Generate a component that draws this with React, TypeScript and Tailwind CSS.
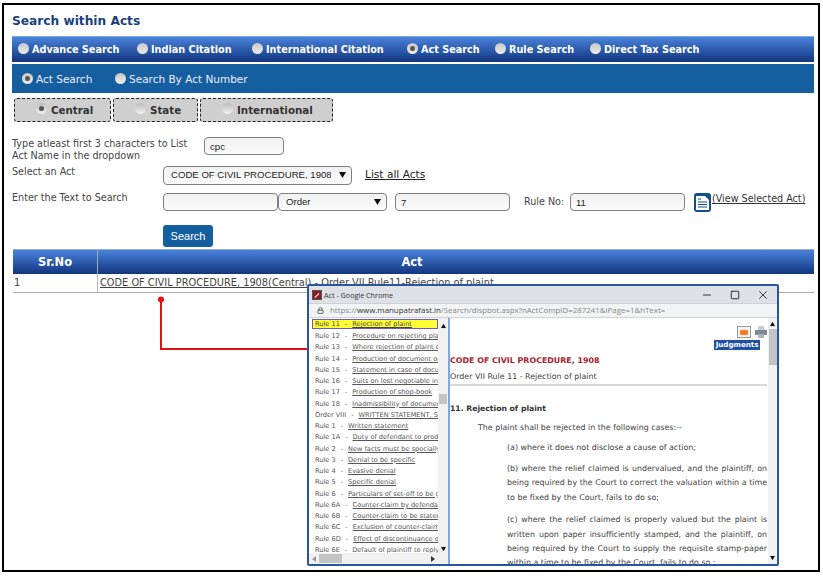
import React from "react";
import { Lock, Minus, Square, X } from "lucide-react";

const Radio = ({ on, light }: { on?: boolean; light?: boolean }) => (
  <span
    className={`inline-flex items-center justify-center w-[11px] h-[11px] rounded-full shrink-0 relative -top-[2px] bg-gradient-to-b ${light ? "from-[#bcbcbc] to-[#f2f2f2]" : "from-[#c8c8c8] to-[#ececec]"}`}
  >
    {on && <span className="w-[5px] h-[5px] rounded-full bg-[#555]" />}
  </span>
);

const Nav = ({ label, on, w }: { label: string; on?: boolean; w: string }) => (
  <span className={`flex items-center gap-[3px] ${w}`}>
    <Radio on={on} />
    <span>{label}</span>
  </span>
);

const Seg = ({ label, on, w, pl }: { label: string; on?: boolean; w: string; pl: string }) => (
  <div className={`flex items-center gap-[4px] h-[24px] pt-[1px] bg-[#cfcfcf] border border-dashed border-[#222] rounded-[3px] ${w} ${pl}`}>
    <Radio on={on} light />
    <span>{label}</span>
  </div>
);

const field = "h-[18px] border border-[#808080] rounded-[4px] bg-gradient-to-b from-[#f1f1f1] to-[#fbfbfb] text-[9.6px] text-[#222] px-[5px] outline-none [font-family:'Liberation_Sans',sans-serif]";

const Arrow = ({ cls }: { cls: string }) => (
  <svg className={`absolute ${cls}`} width="7" height="6" viewBox="0 0 7 6"><path d="M0 0h7L3.5 6z" fill="#111" /></svg>
);

const rules: [string, string][] = [
  ["Rule 12", "Procedure on rejecting plaint"],
  ["Rule 13", "Where rejection of plaint does"],
  ["Rule 14", "Production of document on which"],
  ["Rule 15", "Statement in case of documents"],
  ["Rule 16", "Suits on lost negotiable instruments"],
  ["Rule 17", "Production of shop-book"],
  ["Rule 18", "Inadmissibility of document not"],
  ["Order VIII", "WRITTEN STATEMENT, SET-OFF"],
  ["Rule 1", "Written statement"],
  ["Rule 1A", "Duty of defendant to produce"],
  ["Rule 2", "New facts must be specially pleaded"],
  ["Rule 3", "Denial to be specific"],
  ["Rule 4", "Evasive denial"],
  ["Rule 5", "Specific denial"],
  ["Rule 6", "Particulars of set-off to be given"],
  ["Rule 6A", "Counter-claim by defendant"],
  ["Rule 6B", "Counter-claim to be stated"],
  ["Rule 6C", "Exclusion of counter-claim"],
  ["Rule 6D", "Effect of discontinuance of suit"],
  ["Rule 6E", "Default of plaintiff to reply"],
];

const Popup = () => (
  <div className="absolute left-[307px] top-[284px] w-[472px] h-[282px] border-2 border-[#2a569f] rounded-[2px] bg-white flex flex-col overflow-hidden [font-family:'DejaVu_Sans',sans-serif]">
    <div className="h-[17px] shrink-0 bg-[#dee1e6] flex items-center pl-[3px] pt-[1px] text-[#333] [font-family:'Open_Sans',sans-serif] text-[7.2px]">
      <span className="w-[10px] h-[10px] bg-[#8c1c1c] border border-[#555] mr-[2px] flex items-center justify-center">
        <span className="w-[6px] h-[1px] bg-white -rotate-45" />
      </span>
      <span>Act - Google Chrome</span>
      <span className="ml-auto flex items-center text-[#333]">
        <span className="w-[28px] flex justify-center"><Minus size={12} strokeWidth={2.4} /></span>
        <span className="w-[28px] flex justify-center"><Square size={10} strokeWidth={2.4} /></span>
        <span className="w-[28px] flex justify-center"><X size={14} strokeWidth={1.6} /></span>
      </span>
    </div>
    <div className="h-[15px] shrink-0 bg-[#f1f3f4] border-y border-[#cfd1d4] flex items-center pl-[8px] text-[7.9px] [font-family:'Open_Sans',sans-serif] text-[#888] whitespace-nowrap">
      <Lock size={7} className="mr-[6px] text-[#555]" strokeWidth={3} />
      <span>https://</span><span className="text-[#333]">www.manupatrafast.in</span><span>/Search/dispbot.aspx?nActCompID=287241&amp;iPage=1&amp;hText=</span>
    </div>
    <div className="flex flex-1 min-h-0">
      <div className="w-[141px] shrink-0 border-r-2 border-[#7fa9dc] flex flex-col">
        <div className="flex flex-1 min-h-0">
          <div className="w-[129px] overflow-hidden text-[6.6px] leading-[11.25px] text-[#555] whitespace-nowrap pl-[3px] pt-[1px]">
            <div className="h-[10px] mb-[2px] bg-[#ffff33] border border-[#6a5acd] text-[#444] pl-[2px] leading-[9px]">
              Rule 11<span className="mx-[5px]">-</span><span className="underline">Rejection of plaint</span>
            </div>
            {rules.map(([a, b]) => (
              <div key={a} className="pl-[3px]">
                {a}<span className="mx-[5px]">-</span><span className="underline text-[#555]">{b}</span>
              </div>
            ))}
          </div>
          <div className="flex-1 bg-[#f1f1f1] relative">
            <Arrow cls="top-[5px] left-[2px] rotate-180 scale-75" />
            <div className="absolute top-[76px] left-[1px] w-[8px] h-[10px] bg-[#c4c4c4]" />
            <Arrow cls="bottom-[1px] left-[2px] scale-75" />
          </div>
        </div>
        <div className="h-[11px] shrink-0 bg-[#f1f1f1] flex items-center relative">
          <svg className="absolute left-[3px] top-[3px]" width="4" height="6" viewBox="0 0 4 6"><path d="M4 0v6L0 3z" fill="#999" /></svg>
          <div className="absolute left-[10px] top-[1px] w-[23px] h-[9px] bg-[#c4c4c4]" />
          <svg className="absolute left-[122px] top-[3px]" width="4" height="6" viewBox="0 0 4 6"><path d="M0 0v6l4-3z" fill="#333" /></svg>
        </div>
      </div>
      <div className="flex-1 flex min-w-0">
        <div className="flex-1 min-w-0 relative overflow-hidden text-[7.9px] text-[#444]">
          <div className="flex justify-end items-start gap-[4px] pt-[8px] h-[20px]">
            <span className="w-[14px] h-[12px] bg-[#f2f2f2] border border-[#999] flex items-center justify-center"><span className="w-[8px] h-[5px] bg-[#f47b20] rounded-[1px]" /></span>
            <svg width="12" height="12" viewBox="0 0 12 12"><rect x="3" y="0" width="6" height="4" fill="#c8ced4" /><rect x="0" y="4" width="12" height="5" fill="#7c8894" /><rect x="3" y="8" width="6" height="4" fill="#aab2ba" /></svg>
          </div>
          <div className="flex justify-end pr-[7px] mt-[2px]">
            <span className="h-[10px] w-[46px] bg-[#1f4ea8] text-white text-[7.1px] font-bold leading-[10px] text-center">Judgments</span>
          </div>
          <div className="mt-[5px] text-[#a8202a] font-bold text-[7.9px] leading-[12px]">CODE OF CIVIL PROCEDURE, 1908</div>
          <div className="mt-[4px] leading-[12px]">Order VII Rule 11 - Rejection of plaint</div>
          <div className="mt-[1px] h-[2px] bg-[#d9d9d9]" />
          <div className="mt-[17px] font-bold text-[7.7px] leading-[12px] text-[#333]">11. Rejection of plaint</div>
          <p className="pl-[28px] mt-[6px] leading-[14px]">The plaint shall be rejected in the following cases:--</p>
          <p className="pl-[57px] mt-[6px] leading-[14px]">(a) where it does not disclose a cause of action;</p>
          <p className="ml-[57px] mt-[7px] leading-[14.4px] text-justify">(b) where the relief claimed is undervalued, and the plaintiff, on being required by the Court to correct the valuation within a time to be fixed by the Court, fails to do so;</p>
          <p className="ml-[57px] mt-[8px] leading-[14.4px] text-justify">(c) where the relief claimed is properly valued but the plaint is written upon paper insufficiently stamped, and the plaintiff, on being required by the Court to supply the requisite stamp-paper within a time to be fixed by the Court, fails to do so ;</p>
        </div>
        <div className="w-[9px] shrink-0 ml-[1px] bg-[#f1f1f1] relative">
          <Arrow cls="top-[3px] left-[1px] rotate-180 scale-75" />
          <div className="absolute top-[11px] left-[1px] w-[8px] h-[36px] bg-[#c4c4c4]" />
          <Arrow cls="bottom-[3px] left-[1px] scale-75" />
        </div>
      </div>
    </div>
  </div>
);

export default function App() {
  return (
    <div className="w-[823px] h-[576px] bg-white pl-[2px] pr-[3px] pt-[3px] pb-[4px] relative overflow-hidden [font-family:'DejaVu_Sans',sans-serif]">
      <div className="h-full border-2 border-black pl-[8px] pr-[4px] text-[#333] text-[9.7px]">
        <h1 className="text-[12.2px] font-bold text-[#1b3f7c] pt-[6px] pb-[4px] leading-[21px]">Search within Acts</h1>
        <div className="h-[26px] pt-[2px] border-t border-[#7ba7e6] bg-gradient-to-b from-[#4a83dc] to-[#13357f] text-white font-bold flex items-center pl-[6px] text-[9.7px]">
          <Nav label="Advance Search" w="w-[119px]" />
          <Nav label="Indian Citation" w="w-[115px]" />
          <Nav label="International Citation" w="w-[155px]" />
          <Nav label="Act Search" on w="w-[88px]" />
          <Nav label="Rule Search" w="w-[95px]" />
          <Nav label="Direct Tax Search" w="w-[200px]" />
        </div>
        <div className="mt-[2px] h-[29px] pt-[3px] bg-[#155fa0] text-[#eef] flex items-center pl-[10px] text-[10.5px]">
          <span className="flex items-center gap-[3px] w-[93px]"><Radio on /><span>Act Search</span></span>
          <span className="flex items-center gap-[3px]"><Radio /><span>Search By Act Number</span></span>
        </div>
        <div className="flex gap-[2px] mt-[5px] ml-[2px] font-bold text-[#333] text-[10.3px]">
          <Seg label="Central" on w="w-[97px]" pl="pl-[21px]" />
          <Seg label="State" w="w-[85px]" pl="pl-[21px]" />
          <Seg label="International" w="w-[133px]" pl="pl-[21px]" />
        </div>
        <div className="mt-[15px] text-[9.6px] text-[#444] flex flex-col">
          <div className="flex h-[29px]">
            <div className="w-[192px] leading-[11.5px] pt-[1px]">Type atleast first 3 characters to List<br />Act Name in the dropdown</div>
            <input readOnly value="cpc" className={`${field} w-[80px]`} />
          </div>
          <div className="flex h-[27px]">
            <div className="w-[151px] leading-[11.5px]">Select an Act</div>
            <div className="relative">
              <select className={`${field} !h-[19px] w-[189px] !pl-[7px] !pr-[20px] appearance-none`} defaultValue="c">
                <option value="c">CODE OF CIVIL PROCEDURE, 1908(Central)</option>
              </select>
              <Arrow cls="right-[6px] top-[6px]" />
            </div>
            <a className="ml-[13px] mt-[1px] text-[10.6px] text-[#222] underline">List all Acts</a>
          </div>
          <div className="flex h-[32px] items-start">
            <div className="w-[151px] leading-[11.5px] -mt-[1px]">Enter the Text to Search</div>
            <input readOnly className={`${field} w-[115px]`} />
            <div className="relative">
              <select className={`${field} w-[109px] !pl-[7px] appearance-none`} defaultValue="o"><option value="o">Order</option></select>
              <Arrow cls="right-[6px] top-[6px]" />
            </div>
            <input readOnly value="7" className={`${field} w-[115px] ml-[8px]`} />
            <span className="ml-[14px] w-[46px] pt-[2px]">Rule No:</span>
            <input readOnly value="11" className={`${field} w-[115px]`} />
            <svg className="ml-[9px] shrink-0" width="17" height="19" viewBox="0 0 17 19">
              <rect width="17" height="19" rx="3" fill="#134f8a" />
              <path d="M2 3h9l4 4v10H2z" fill="#fff" />
              <path d="M4 6h3M4 9h9M4 11.5h9M4 14h9" stroke="#134f8a" strokeWidth="1" />
            </svg>
            <a className="ml-[1px] -mt-[1px] underline text-[#333]">(View Selected Act)</a>
          </div>
          <div className="pl-[151px]">
            <button className="w-[50px] h-[22px] bg-[#155fa0] text-white text-[11px] rounded-[3px] [font-family:'Liberation_Sans',sans-serif]">Search</button>
          </div>
        </div>
        <div className="mt-[2px] ml-[1px]">
          <div className="flex h-[25px] bg-gradient-to-b from-[#4a83dc] to-[#13357f] text-white font-bold text-[11.5px] border-t border-[#9ab]">
            <div className="w-[85px] border-r border-[#9ab] flex items-center justify-center pt-[2px]">Sr.No</div>
            <div className="flex-1 flex items-center justify-center pr-[88px] pt-[2px]">Act</div>
          </div>
          <div className="flex h-[19px] border-b border-[#aaa] text-[9.8px] text-[#444]">
            <div className="w-[85px] border-r border-[#bbb] pl-[1px] pt-[1px] flex items-center">1</div>
            <div className="flex-1 pl-[2px] pt-[1px] flex items-center whitespace-nowrap">
              <a className="underline">CODE OF CIVIL PROCEDURE, 1908(Central)</a>
              <span>&nbsp;- Order VII Rule11-Rejection of plaint</span>
            </div>
          </div>
        </div>
      </div>
      <svg className="absolute left-[155px] top-[295px]" width="155" height="60" viewBox="0 0 155 60">
        <circle cx="6" cy="4.5" r="3" fill="#e01010" />
        <path d="M6 5V54H155" fill="none" stroke="#d81414" strokeWidth="2" />
      </svg>
      <Popup />
    </div>
  );
}
